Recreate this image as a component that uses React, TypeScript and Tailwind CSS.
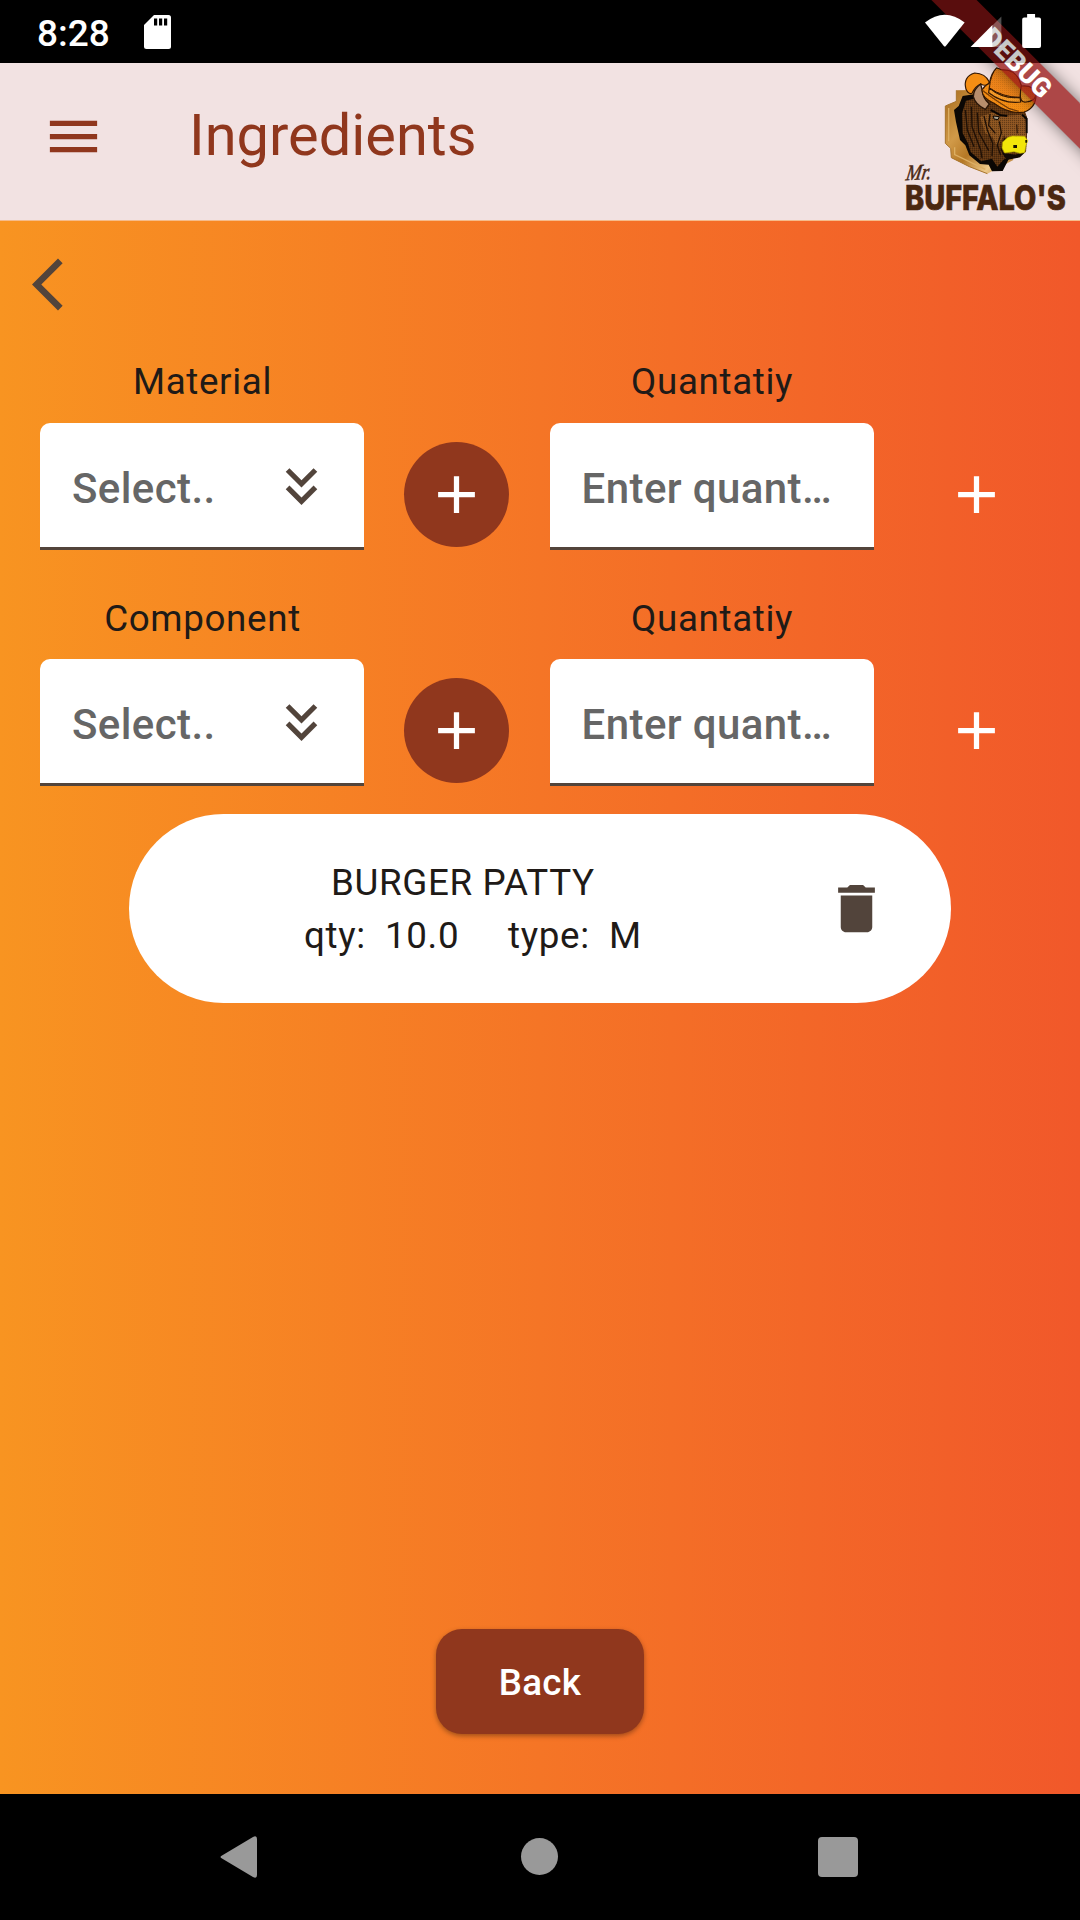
import React from 'react';

type IconProps = { className?: string; d: string };

function Icon({ className = '', d }: IconProps) {
  return (
    <svg viewBox="0 0 24 24" className={`h-[63px] w-[63px] shrink-0 fill-current ${className}`}>
      <path d={d} />
    </svg>
  );
}

const MENU = 'M3 18h18v-2H3v2zm0-5h18v-2H3v2zm0-7v2h18V6H3z';
const BACK = 'M11.67 3.87L9.9 2.1 0 12l9.9 9.9 1.77-1.77L3.54 12z';
const ADD = 'M19 13h-6v6h-2v-6H5v-2h6V5h2v6h6v2z';
const DOUBLE_DOWN =
  'M18 6.41L16.59 5 12 9.58 7.41 5 6 6.41l6 6zM18 13l-1.41-1.41L12 16.17l-4.59-4.58L6 13l6 6z';
const TRASH =
  'M6 19c0 1.1.9 2 2 2h8c1.1 0 2-.9 2-2V7H6v12zM19 4h-3.5l-1-1h-5l-1 1H5v2h14V4z';

function Logo() {
  return (
    <svg viewBox="60 195 510 471" className="h-[157px] w-[170px]">
      <defs>
        <linearGradient id="plaque" x1="0" y1="0" x2="1" y2="1">
          <stop offset="0" stopColor="#a66a1c" />
          <stop offset="0.35" stopColor="#d19a48" />
          <stop offset="0.55" stopColor="#b57825" />
          <stop offset="0.78" stopColor="#edc888" />
          <stop offset="1" stopColor="#a8661a" />
        </linearGradient>
        <pattern id="dither" width="6" height="6" patternUnits="userSpaceOnUse">
          <rect width="3" height="3" fill="#1a0d00" fillOpacity="0.35" />
          <rect x="3" y="3" width="3" height="3" fill="#c87a28" fillOpacity="0.15" />
        </pattern>
      </defs>
      <path d="M229 271L286 270L372 292L400 480L322 521L268 500L214 473L212 445L196 430V318L229 304Z" fill="url(#plaque)" />
      <path d="M229 271V304L196 318V430L212 445L214 473L268 500L322 521" fill="none" stroke="#a8742c" strokeWidth="3" />
      <path d="M206 324V424M224 442V464L316 508" fill="none" stroke="#dcae62" strokeWidth="4" />
      <path d="M248 288L286 282L304 330L330 460L388 474L368 513L336 514L326 494L300 492L268 466L256 436L240 420L228 366L222 330L236 318Z" fill="#0b0704" />
      <path d="M258 302L300 292L350 310L432 326L441 352V410L438 455L414 472L372 478L352 500L336 476L304 484L272 456L264 430L248 400L246 340Z" fill="#5a3312" />
      <path d="M300 350L342 336L366 352L374 402L352 440L338 412L316 400Z" fill="#8a5421" />
      <path d="M364 348L430 344L439 374L438 412L376 412L362 380Z" fill="#8a5322" />
      <path d="M258 302L300 292L350 310L432 326L441 352V410L438 455L414 472L372 478L352 500L336 476L304 484L272 456L264 430L248 400L246 340Z" fill="url(#dither)" />
      <path d="M256 330L262 390L282 440M274 320L276 380L302 450L306 474M292 338L296 396L326 452M312 348L322 390L338 430L336 468M330 342L326 376L346 400M358 364L364 398L352 436L362 466M374 414L364 450L376 470" fill="none" stroke="#1f1006" strokeWidth="4" />
      <path d="M332 330L362 346L382 348M426 344L440 356V400" fill="none" stroke="#0b0603" strokeWidth="6" />
      <path d="M340 348L358 350L354 359L342 357Z" fill="#a9a28e" stroke="#0b0603" strokeWidth="3" />
      <path d="M410 374L412 400" stroke="#3a1f0a" strokeWidth="4" />
      <path d="M366 458L406 464L436 456L420 472L380 480Z" fill="#120a05" />
      <path d="M384 412L398 408L434 409L443 422L438 436L434 458L420 460L402 455L374 459L366 444L368 426Z" fill="#f2e60a" stroke="#b5a600" strokeWidth="2" />
      <path d="M400 435h11v9h-11zM436 420h5v8h-5z" fill="#171200" />
      <path d="M258 268Q248 230 284 219Q316 220 328 246Q322 262 302 252Q286 258 276 280Q266 284 258 268Z" fill="#f58e14" stroke="#351803" strokeWidth="3.5" />
      <path d="M302 252Q280 268 280 290Q286 314 316 328L328 312Q308 294 306 268Z" fill="#b78e6d" stroke="#2a1608" strokeWidth="4" />
      <path d="M328 250Q334 218 350 204Q366 212 384 211Q414 218 424 258Q462 254 468 284Q468 324 432 336Q388 344 342 310Q306 294 306 270Q314 256 328 250Z" fill="#f58e14" stroke="#351803" strokeWidth="3.5" />
      <path d="M350 204Q366 212 384 211Q414 218 424 258L420 292Q370 292 328 264Q332 222 350 204Z" fill="#f0851a" stroke="#351803" strokeWidth="3" />
      <path d="M328 264Q368 298 420 292L422 306Q370 312 326 278ZM424 258Q414 310 438 306Q462 304 466 290" fill="#f89d28" stroke="#351803" strokeWidth="3.5" />
      <path d="M306 270Q350 304 388 326L416 334" fill="none" stroke="#763b05" strokeWidth="3.500" />
      <path d="M328 250Q334 218 350 204Q366 212 384 211Q414 218 424 258Q462 254 468 284Q468 324 432 336Q388 344 342 310Q306 294 306 270Q314 256 328 250Z" fill="url(#dither)" fillOpacity="0.3" />
      <text transform="translate(76 541) rotate(-3) skewX(-12)" fontFamily="Liberation Serif, serif" fontStyle="italic" fontSize="66" textLength="76" lengthAdjust="spacingAndGlyphs" fill="#4a2814" stroke="#4a2814" strokeWidth="1.5">Mr.</text>
      <text transform="translate(75 629) scale(0.84 1)" fontFamily="Inter, sans-serif" fontWeight="800" fontSize="104" textLength="574" lengthAdjust="spacingAndGlyphs" fill="#4b2710" stroke="#4b2710" strokeWidth="2">BUFFALO'S</text>
    </svg>
  );
}

function DebugBanner() {
  return (
    <>
      <div className="pointer-events-none absolute top-0 right-0 h-[260px] w-[260px] overflow-hidden">
        <div className="absolute top-[47px] left-[-3px] h-[32px] w-[400px] rotate-45 bg-[#971717]/[0.76] shadow-[0_0_16px_rgba(0,0,0,0.5)]" />
      </div>
      <div className="absolute top-[47px] right-[13px] flex h-[32px] w-[100px] rotate-45 items-center justify-center text-[26.8px] leading-[32px] font-black text-white">
        DEBUG
      </div>
    </>
  );
}

function StatusBar() {
  return (
    <div className="absolute inset-x-0 top-0 flex h-[63px] items-center bg-black/[0.22] text-white">
      <span className="ml-[37px] w-[107px] pt-[4px] text-[37px] leading-[44px] font-medium">8:28</span>
      <svg viewBox="0 0 27 34" className="h-[34px] w-[27px]">
        <path d="M10 0H24.500Q27 0 27 2.500V31.500Q27 34 24.500 34H2.500Q0 34 0 31.500V10Z" fill="#fff" />
        <path d="M10 3.500h3.200v7H10zM15 3.500h3.200v7H15zM20 3.500h3.200v7H20z" fill="#000" />
      </svg>
      <svg viewBox="0 0 120 36" className="mr-[37px] ml-auto h-[36px] w-[119px]" preserveAspectRatio="none">
        <path d="M1 8.500Q21 -7 41 8.500L22 32Q21 33 20 32Z" fill="#fff" />
        <path d="M69 11.500L78 2.500V33H69Z" fill="#fff" fillOpacity="0.3" />
        <path d="M47 33L69 11V33Z" fill="#fff" />
        <path d="M104 0h8v3.500h4q2 0 2 2V32q0 2-2 2H101q-2 0-2-2V5.500q0-2 2-2h3z" fill="#fff" />
      </svg>
    </div>
  );
}

type RowProps = { label: string; labelClass: string };

function Field({ text, icon }: { text: string; icon?: boolean }) {
  return (
    <div className="flex h-[127px] w-[324px] items-center rounded-t-[10px] border-b-[3px] border-[#52443b] bg-white pr-[31px] pl-8">
      <span className="flex-1 pt-[7px] text-[42px] leading-[48px] font-medium tracking-[0.4px] whitespace-nowrap text-[#666]">{text}</span>
      {icon && <Icon d={DOUBLE_DOWN} className="mt-[2px] text-[#52443b]" />}
    </div>
  );
}

function IngredientRow({ label, labelClass }: RowProps) {
  return (
    <div className="flex h-[236px] pl-10">
      <div className="flex flex-col">
        <div className={`w-[325px] text-center text-[36.75px] leading-[42px] tracking-[0.65px] ${labelClass}`}>{label}</div>
        <div className="h-[191px]"><Field text="Select.." icon /></div>
      </div>
      <div className="mt-[82px] ml-[39px] flex h-[105px] w-[105px] items-center justify-center rounded-full bg-[#90371d] text-white">
        <Icon d={ADD} />
      </div>
      <div className="ml-[40.6px] flex flex-col">
        <div className={`w-[325px] text-center text-[36.75px] leading-[42px] tracking-[0.65px] ${labelClass}`}>Quantatiy</div>
        <div className="h-[191px]"><Field text="Enter quant…" /></div>
      </div>
      <div className="mt-[82px] ml-[49.4px] flex h-[105px] w-[105px] items-center justify-center text-white">
        <Icon d={ADD} />
      </div>
    </div>
  );
}

export default function App() {
  return (
    <div className="relative flex h-[1920px] w-[1080px] flex-col overflow-hidden bg-black font-['Roboto',sans-serif] text-[#201a17]">
      <div className="h-[63px] shrink-0 bg-black" />
      <header className="flex h-[158px] shrink-0 items-start border-b border-[#f6bb8a] bg-[#f2e2e2] text-[#90371d]">
        <Icon d={MENU} className="mt-[42px] ml-[42px]" />
        <h1 className="ml-[84px] flex-1 pt-[37px] text-[57.75px] leading-[70px]">Ingredients</h1>
        <div className="mt-[2px] mr-[10px] h-[150px]"><Logo /></div>
      </header>
      <main className="flex flex-1 flex-col bg-linear-to-r/srgb from-[#f89421] via-[#f57526] to-[#f1582a]">
        <button className="mt-8 ml-[31.5px] h-[63px] w-[63px] text-[#52443b]"><Icon d={BACK} /></button>
        <div className="mt-11">
          <IngredientRow label="Material" labelClass="relative top-px mb-[21px]" />
          <IngredientRow label="Component" labelClass="relative top-[2px] mb-[21px]" />
        </div>
        <section className="mt-[-18px] flex h-[189px] w-[822px] items-center self-center rounded-full bg-white">
          <div className="ml-[175px] w-[339px] text-[36.75px] leading-[53px] tracking-[0.65px]">
            <p className="ml-[27px] whitespace-nowrap">BURGER PATTY</p>
            <p className="flex whitespace-nowrap">
              <span className="w-[81px]">qty:</span>
              <span className="w-[123px]">10.0</span>
              <span className="w-[101px]">type:</span>
              <span>M</span>
            </p>
          </div>
          <button className="ml-[182px] text-[#52443b]"><Icon d={TRASH} /></button>
        </section>
        <button className="mt-auto mb-[60px] flex h-[105px] w-[208px] items-center justify-center self-center rounded-[26px] bg-[#90371d] pt-[2px] text-[36.75px] font-medium tracking-[0.26px] text-white shadow-[0_2px_5px_rgba(0,0,0,0.35)]">
          Back
        </button>
      </main>
      <nav className="flex h-[126px] shrink-0 items-center bg-black pl-[220px]">
        <svg viewBox="0 0 37 42" className="h-[42px] w-[37px]">
          <path d="M2 19.500L33 1Q37 -1 37 3V39Q37 43 33 41L2 22.500Q-1 21 2 19.500Z" fill="#999" />
        </svg>
        <div className="mb-px ml-[264px] h-[37px] w-[37px] rounded-full bg-[#999]" />
        <div className="ml-[260px] h-10 w-10 rounded-[4px] bg-[#999]" />
      </nav>
      <DebugBanner />
      <StatusBar />
    </div>
  );
}
